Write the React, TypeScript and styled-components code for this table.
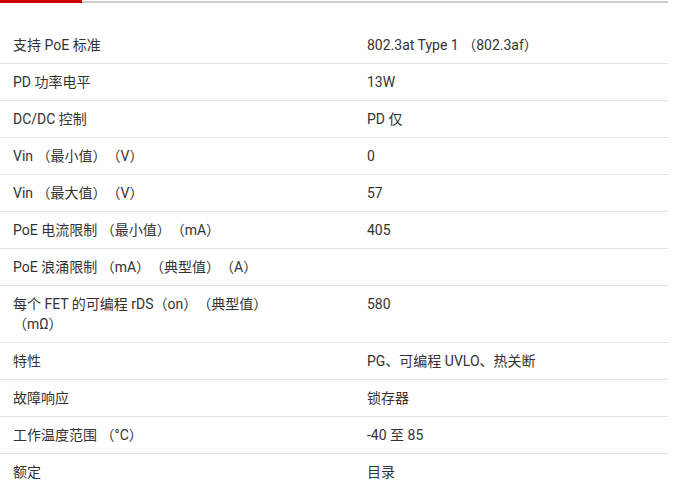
import React from "react"
import styled, { createGlobalStyle } from "styled-components"

const GlobalStyle = createGlobalStyle`
  html, body {
    margin: 0;
    padding: 0;
    background: #ffffff;
  }
  body {
    font-family: Roboto, "Noto Sans CJK SC", sans-serif;
    color: #333333;
  }
`

const Page = styled.div`
  width: 668px;
`

const TabBar = styled.div`
  position: relative;
  height: 1px;
  border-bottom: 2px solid #cccccc;
`

const ActiveTab = styled.span`
  position: absolute;
  left: 0;
  top: 0;
  width: 82px;
  height: 3px;
  background-color: #cc0000;
`

const SpecTable = styled.div`
  display: grid;
  grid-template-columns: 354px 1fr;
  margin-top: 24px;
`

const Cell = styled.div<{ $label?: boolean }>`
  padding: 8px ${props => (props.$label ? "50px" : "13px")} 8px 13px;
  font-size: 14px;
  line-height: 20px;
  min-height: 20px;
  text-spacing-trim: space-all;
  border-bottom: 1px solid #e4e4e4;
`

const rows: [string, string][] = [
  ["支持 PoE 标准", "802.3at Type 1 （802.3af）"],
  ["PD 功率电平", "13W"],
  ["DC/DC 控制", "PD 仅"],
  ["Vin （最小值）（V）", "0"],
  ["Vin （最大值）（V）", "57"],
  ["PoE 电流限制 （最小值）（mA）", "405"],
  ["PoE 浪涌限制 （mA）（典型值）（A）", ""],
  ["每个 FET 的可编程 rDS（on）（典型值）（mΩ）", "580"],
  ["特性", "PG、可编程 UVLO、热关断"],
  ["故障响应", "锁存器"],
  ["工作温度范围 （°C）", "-40 至 85"],
  ["额定", "目录"],
]

export default function App() {
  return (
    <Page>
      <GlobalStyle />
      <TabBar>
        <ActiveTab />
      </TabBar>
      <SpecTable>
        {rows.map(([label, value]) => (
          <React.Fragment key={label}>
            <Cell $label>{label}</Cell>
            <Cell>{value}</Cell>
          </React.Fragment>
        ))}
      </SpecTable>
    </Page>
  )
}
